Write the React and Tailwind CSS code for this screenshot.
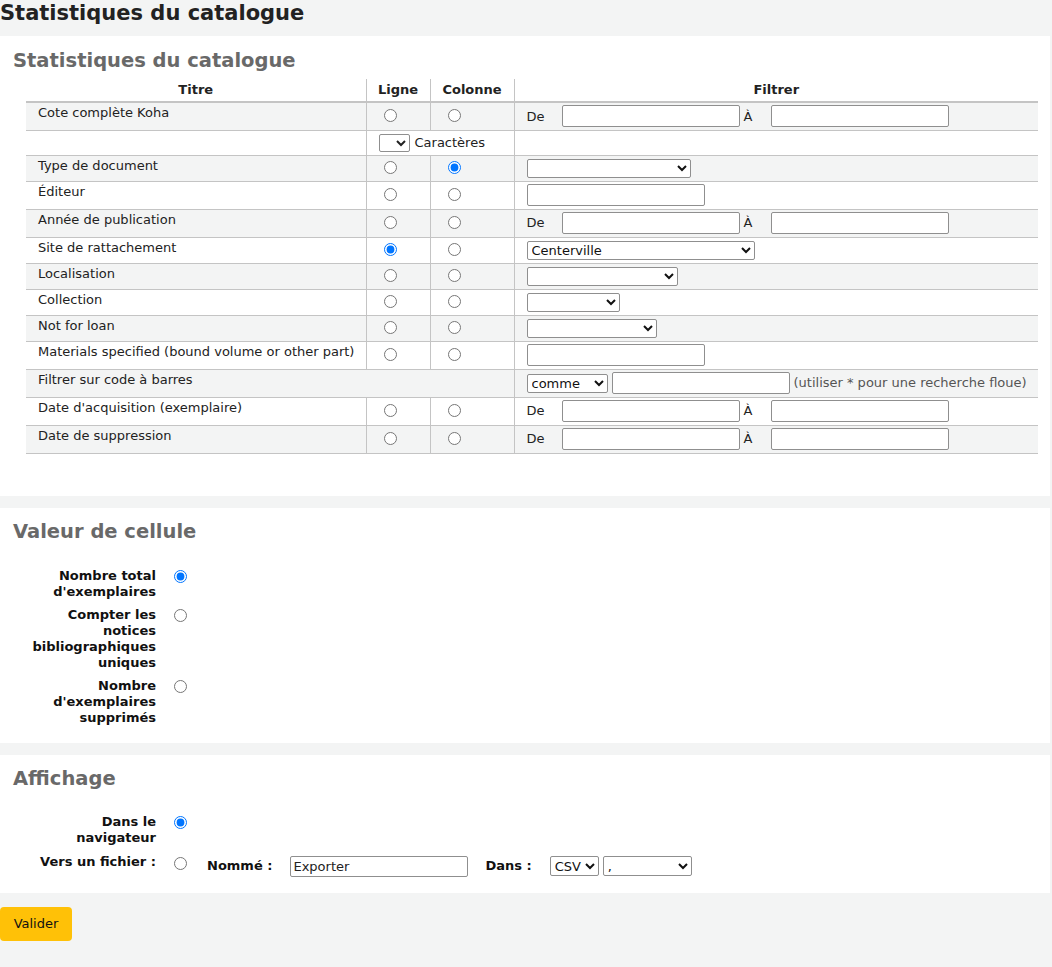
import React from 'react';

const font = { fontFamily: '"DejaVu Sans", Verdana, sans-serif' };

// lignes du tableau : titre, hauteur, type de filtre
const rows = [
  { title: 'Cote complète Koha', h: 'h-[28px]', filter: 'range', radios: [false, false] },
  { title: '', h: 'h-[25px]', chars: true },
  { title: 'Type de document', h: 'h-[26px]', filter: 'select', w: 'w-[164px]', radios: [false, true] },
  { title: 'Éditeur', h: 'h-[28px]', filter: 'input', radios: [false, false] },
  { title: 'Année de publication', h: 'h-[28px]', filter: 'range', radios: [false, false] },
  { title: 'Site de rattachement', h: 'h-[26px]', filter: 'select', w: 'w-[228px]', value: 'Centerville', radios: [true, false] },
  { title: 'Localisation', h: 'h-[26px]', filter: 'select', w: 'w-[151px]', radios: [false, false] },
  { title: 'Collection', h: 'h-[26px]', filter: 'select', w: 'w-[93px]', radios: [false, false] },
  { title: 'Not for loan', h: 'h-[26px]', filter: 'select', w: 'w-[130px]', radios: [false, false] },
  { title: 'Materials specified (bound volume or other part)', h: 'h-[28px]', filter: 'input', radios: [false, false] },
  { title: 'Filtrer sur code à barres', h: 'h-[28px]', barcode: true },
  { title: "Date d'acquisition (exemplaire)", h: 'h-[28px]', filter: 'range', radios: [false, false] },
  { title: 'Date de suppression', h: 'h-[28px]', filter: 'range', radios: [false, false] },
];

const inputCls = 'h-[22px] w-[178px] border border-[#8f8f8f] rounded-[2px] bg-white px-[2px] text-[13px]';
const selectCls = 'h-[19px] border border-[#8f8f8f] rounded-[2px] bg-white pl-0 text-[13px] text-[#111]';

function Radio({ checked, name, className = '' }) {
  return (
    <input
      type="radio"
      name={name}
      defaultChecked={checked}
      className={'block m-0 w-[13px] h-[13px] ' + className}
    />
  );
}

function Filter({ row }) {
  if (row.filter === 'range') {
    return (
      <div className="flex items-center">
        <span className="w-[35px]">De</span>
        <input className={inputCls} />
        <span className="ml-[4px] w-[27px]">À</span>
        <input className={inputCls} />
      </div>
    );
  }
  if (row.filter === 'select') {
    return (
      <select className={selectCls + ' block ' + row.w} defaultValue={row.value || ''}>
        <option value="">{''}</option>
        {row.value && <option value={row.value}>{row.value}</option>}
      </select>
    );
  }
  return <input className={inputCls + ' block'} />;
}

export default function App() {
  return (
    <div className="min-h-[967px] w-[1052px] bg-[#f3f4f4] text-[13px] text-[#222]" style={font}>
      <h1 className="text-[21px] leading-[26px] font-bold text-[#222] h-9">Statistiques du catalogue</h1>

      {/* Panneau 1 : tableau */}
      <div className="w-[1050px] bg-white pt-[13px] pb-[42px]">
        <h2 className="ml-[13px] text-[19.5px] leading-6 font-bold text-[#696969]">Statistiques du catalogue</h2>
        <table className="ml-[26px] mt-[6px] w-[1012px] border-collapse table-fixed">
          <colgroup>
            <col className="w-[340px]" />
            <col className="w-[64px]" />
            <col className="w-[84px]" />
            <col className="w-[524px]" />
          </colgroup>
          <thead>
            <tr className="h-[23px]">
              <th className="border-b-2 border-[#c4c4c4] font-bold text-center align-middle">Titre</th>
              <th className="border-b-2 border-l border-[#c4c4c4] font-bold text-center align-middle">Ligne</th>
              <th className="border-b-2 border-l border-[#c4c4c4] font-bold text-center align-middle">Colonne</th>
              <th className="border-b-2 border-l border-[#c4c4c4] font-bold text-center align-middle">Filtrer</th>
            </tr>
          </thead>
          <tbody>
            {rows.map((row, i) => (
              <tr key={i} className={row.h + (i % 2 === 0 ? ' bg-[#f3f4f4]' : ' bg-white')}>
                {row.barcode ? (
                  <>
                    <td colSpan={3} className="border-b border-[#c4c4c4] align-top pt-0 pl-3">{row.title}</td>
                    <td className="border-b border-l border-[#c4c4c4] align-middle pl-3">
                      <div className="flex items-center">
                        <select className={selectCls + ' w-[81px]'} defaultValue="comme">
                          <option value="comme">comme</option>
                        </select>
                        <input className={inputCls + ' ml-[4px]'} />
                        <span className="ml-[4px] text-[#555]">(utiliser * pour une recherche floue)</span>
                      </div>
                    </td>
                  </>
                ) : row.chars ? (
                  <>
                    <td className="border-b border-[#c4c4c4]"></td>
                    <td colSpan={2} className="border-b border-l border-[#c4c4c4] align-middle pl-3">
                      <div className="flex items-center">
                        <select className="h-[18px] w-[31px] border border-[#8f8f8f] rounded-[2px] bg-white text-[13px]">
                          <option>{''}</option>
                        </select>
                        <span className="ml-[5px]">Caractères</span>
                      </div>
                    </td>
                    <td className="border-b border-l border-[#c4c4c4]"></td>
                  </>
                ) : (
                  <>
                    <td className="border-b border-[#c4c4c4] align-top pt-0 pl-3">{row.title}</td>
                    <td className="border-b border-l border-[#c4c4c4] align-middle pl-[17px]">
                      <Radio name="line" checked={row.radios[0]} className="mb-[2px]" />
                    </td>
                    <td className="border-b border-l border-[#c4c4c4] align-middle pl-[17px]">
                      <Radio name="column" checked={row.radios[1]} className="mb-[2px]" />
                    </td>
                    <td className="border-b border-l border-[#c4c4c4] align-middle pl-3">
                      <Filter row={row} />
                    </td>
                  </>
                )}
              </tr>
            ))}
          </tbody>
        </table>
      </div>

      {/* Panneau 2 : valeur de cellule */}
      <div className="w-[1050px] bg-white mt-3 pt-3 pb-[17px]">
        <h2 className="ml-[13px] text-[19.5px] leading-6 font-bold text-[#696969]">Valeur de cellule</h2>
        <div className="mt-6 flex flex-col gap-[7px]">
          {[
            ['Nombre total d\'exemplaires', true],
            ['Compter les notices bibliographiques uniques', false],
            ['Nombre d\'exemplaires supprimés', false],
          ].map(([label, checked]) => (
            <div key={label} className="flex items-start">
              <label className="ml-[26px] w-[130px] text-right font-bold leading-4 text-[#111]">{label}</label>
              <Radio name="cellvalue" checked={checked} className="ml-[18px] mt-[2px]" />
            </div>
          ))}
        </div>
      </div>

      {/* Panneau 3 : affichage */}
      <div className="w-[1050px] bg-white mt-3 pt-3 pb-[16px]">
        <h2 className="ml-[13px] text-[19.5px] leading-6 font-bold text-[#696969]">Affichage</h2>
        <div className="mt-[23px] flex flex-col gap-[8px]">
          <div className="flex items-start">
            <label className="ml-[26px] w-[130px] text-right font-bold leading-4 text-[#111]">Dans le navigateur</label>
            <Radio name="output" checked className="ml-[18px] mt-[2px]" />
          </div>
          <div className="flex items-start">
            <label className="ml-[26px] w-[130px] text-right font-bold leading-4 text-[#111]">Vers un fichier :</label>
            <Radio name="output" className="ml-[18px] mt-[3px]" />
            <div className="flex items-center mt-[2px]">
              <span className="ml-[20px] font-bold text-[#111]">Nommé :</span>
              <input className="ml-[18px] h-[21px] w-[178px] border border-[#8f8f8f] rounded-[2px] bg-white px-[2px] text-[13px]" defaultValue="Exporter" />
              <span className="ml-[17px] font-bold text-[#111]">Dans :</span>
              <select className={selectCls + ' ml-[18px] w-[49px] h-[20px]'} defaultValue="CSV">
                <option value="CSV">CSV</option>
              </select>
              <select className={selectCls + ' ml-[4px] w-[89px] h-[20px]'} defaultValue=",">
                <option value=",">,</option>
              </select>
            </div>
          </div>
        </div>
      </div>

      <button className="mt-[14px] h-[34px] w-[72px] rounded-[4px] bg-[#ffc107] text-[13px] text-[#111]">Valider</button>
    </div>
  );
}
